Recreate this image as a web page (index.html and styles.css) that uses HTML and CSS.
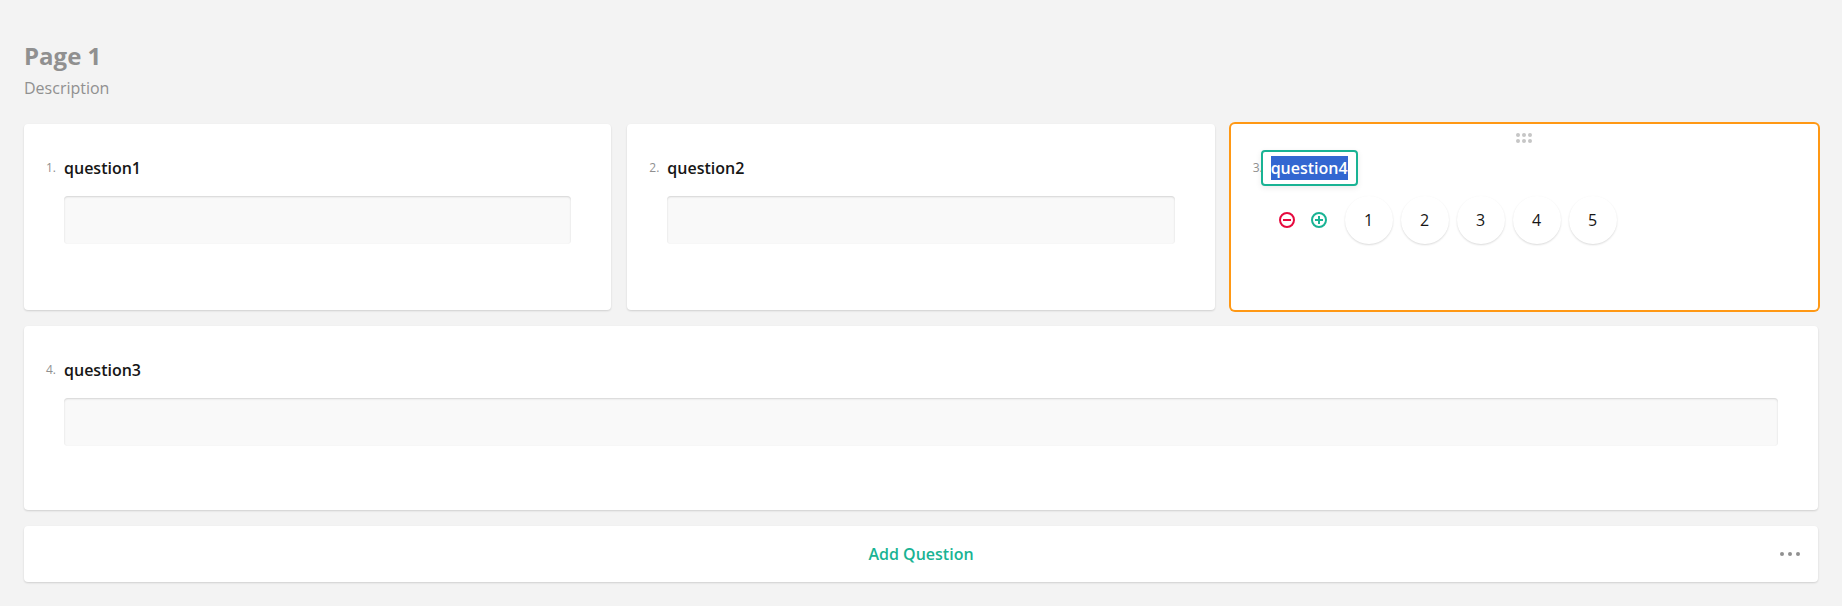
FILE: index.html
```html
<!DOCTYPE html>
<html lang="en">
<head>
<meta charset="utf-8">
<title>Survey designer</title>
<link rel="stylesheet" href="styles.css">
</head>
<body>
<main class="page">
  <header class="page-header">
    <h1 class="page-title">Page 1</h1>
    <p class="page-description">Description</p>
  </header>
  <div class="row row-three">
    <section class="card">
      <div class="question-header"><span class="number">1.</span><span class="title">question1</span></div>
      <div class="text-input"></div>
    </section>
    <section class="card">
      <div class="question-header"><span class="number">2.</span><span class="title">question2</span></div>
      <div class="text-input"></div>
    </section>
    <section class="card selected">
      <svg class="drag-handle" width="16" height="10" viewBox="0 0 16 10"><circle cx="2" cy="2" r="2"/><circle cx="8" cy="2" r="2"/><circle cx="14" cy="2" r="2"/><circle cx="2" cy="8" r="2"/><circle cx="8" cy="8" r="2"/><circle cx="14" cy="8" r="2"/></svg>
      <div class="question-header"><span class="number">3.</span><span class="title editing"><span class="selection">question4</span></span></div>
      <div class="rating">
        <svg class="rating-action remove" width="16" height="16" viewBox="0 0 16 16"><circle cx="8" cy="8" r="7"/><path d="M4 8h8"/></svg>
        <svg class="rating-action add" width="16" height="16" viewBox="0 0 16 16"><circle cx="8" cy="8" r="7"/><path d="M4 8h8M8 4v8"/></svg>
        <div class="rating-items">
          <span class="rating-item">1</span><span class="rating-item">2</span><span class="rating-item">3</span><span class="rating-item">4</span><span class="rating-item">5</span>
        </div>
      </div>
    </section>
  </div>
  <div class="row row-single">
    <section class="card">
      <div class="question-header"><span class="number">4.</span><span class="title">question3</span></div>
      <div class="text-input"></div>
    </section>
  </div>
  <div class="add-question">
    <span class="add-label">Add Question</span>
    <svg class="more" width="20" height="4" viewBox="0 0 20 4"><circle cx="2" cy="2" r="2"/><circle cx="10" cy="2" r="2"/><circle cx="18" cy="2" r="2"/></svg>
  </div>
</main>
</body>
</html>
```

FILE: styles.css
```css
* {
  box-sizing: border-box;
}

body {
  margin: 0;
  background: #f3f3f3;
  color: #161616;
  font-family: "Open Sans", sans-serif;
  font-size: 16px;
  line-height: 24px;
}

.page {
  display: flex;
  flex-direction: column;
  gap: 16px;
  min-height: 606px;
  padding: 40px 24px 24px;
}

.page-header {
  height: 68px;
  color: #909090;
}

.page-title {
  margin: 0;
  font-size: 24px;
  font-weight: 700;
  line-height: 32px;
}

.page-description {
  margin: 4px 0 0;
}

.row {
  display: grid;
  gap: 16px;
}

.row-three {
  grid-template-columns: repeat(3, 1fr);
  height: 186px;
}

.row-single {
  height: 184px;
}

.card,
.add-question {
  background: #fff;
  border-radius: 4px;
  box-shadow: 0 1px 2px rgba(0, 0, 0, 0.15);
}

.card {
  position: relative;
  padding: 32px 40px;
}

.selected {
  box-shadow: 0 0 0 2px #ff9814;
}

.drag-handle {
  position: absolute;
  top: 9px;
  left: 50%;
  margin-left: -8px;
  fill: #c6c6c6;
}

.question-header {
  display: flex;
  height: 24px;
  margin: 0 0 16px -24px;
}

.number {
  width: 24px;
  padding-right: 8px;
  color: #909090;
  font-size: 12px;
  text-align: right;
}

.title {
  font-weight: 600;
}

.editing {
  position: relative;
  height: 36px;
  margin: -6px 0 0 -10px;
  padding: 4px 8px;
  background: #fff;
  border: 2px solid #19b394;
  border-radius: 4px;
  box-shadow: 0 2px 6px rgba(0, 0, 0, 0.08);
}

.selection {
  display: block;
  background: #3367d1;
  color: #fff;
}

.text-input {
  height: 48px;
  background: #f9f9f9;
  border-radius: 4px;
  box-shadow: inset 0 1px 2px rgba(0, 0, 0, 0.15);
}

.rating {
  display: flex;
  align-items: center;
  gap: 16px;
  padding-left: 8px;
}

.rating-action {
  fill: none;
  stroke-width: 2;
}

.remove {
  stroke: #e60a3e;
}

.add {
  stroke: #19b394;
}

.rating-items {
  display: flex;
  gap: 8px;
  margin-left: 2px;
}

.rating-item {
  width: 48px;
  height: 48px;
  border-radius: 50%;
  box-shadow: 0 1px 2px rgba(0, 0, 0, 0.15);
  line-height: 48px;
  text-align: center;
}

.add-question {
  display: grid;
  grid-template-columns: 1fr auto 1fr;
  align-items: center;
  height: 56px;
  padding: 0 18px;
}

.add-label {
  grid-column: 2;
  color: #19b394;
  font-weight: 600;
}

.more {
  justify-self: end;
  fill: #909090;
}
```
